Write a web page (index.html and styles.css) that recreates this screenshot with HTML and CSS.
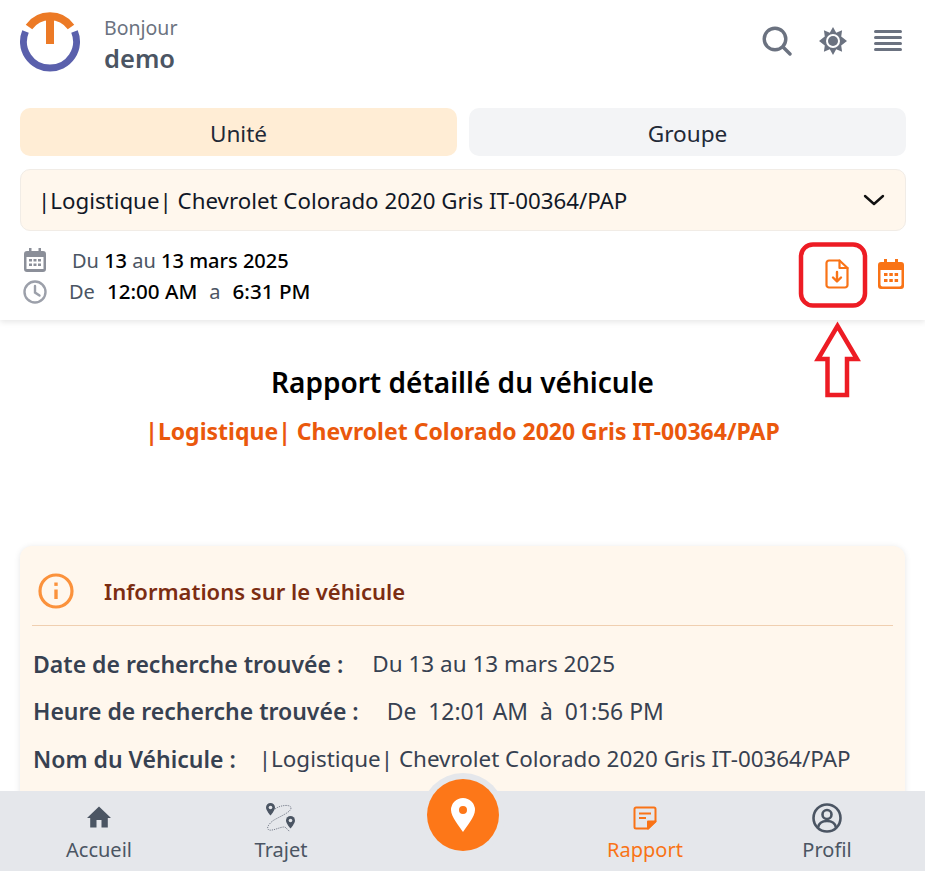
FILE: index.html
```html
<!DOCTYPE html>
<html lang="fr">
<head>
    <meta charset="UTF-8">
    <meta name="viewport" content="width=device-width, initial-scale=1.0">
    <title>Rapport détaillé du véhicule</title>
    <link rel="stylesheet" href="styles.css">
</head>
<body>
    <div class="app">
        <div class="top">
            <header class="header">
                <svg class="logo" viewBox="0 0 60 60" width="60" height="60">
                    <path d="M5.500 19.500A26.500 26.500 0 1 0 54.500 19.500" fill="none" stroke="#5a60ac" stroke-width="7"/>
                    <path d="M9 15A26 26 0 0 1 51 15" fill="none" stroke="#ec7a26" stroke-width="8"/>
                    <rect x="26" y="4" width="8" height="28" fill="#ec7a26"/>
                </svg>
                <div class="hello">
                    <div class="hello-small">Bonjour</div>
                    <div class="hello-name">demo</div>
                </div>
                <div class="header-icons">
                    <svg viewBox="0 0 30 30" width="30" height="30" fill="none" stroke="#6b7280" stroke-width="3.400">
                        <circle cx="13" cy="13" r="10.800"/>
                        <path d="M21 21l7 7" stroke-linecap="round"/>
                    </svg>
                    <svg viewBox="0 0 28 28" width="28" height="28" fill="#6b7280">
                        <path d="M14 0l3.200 5.800 5.900-2.600-.9 6.300L28 14l-5.800 4.500.9 6.300-5.900-2.600L14 28l-3.200-5.800-5.900 2.600.9-6.300L0 14l5.800-4.500-.9-6.300 5.900 2.600z"/>
                        <circle cx="14" cy="14" r="7" fill="#fff"/>
                        <circle cx="14" cy="14" r="5"/>
                    </svg>
                    <svg viewBox="0 0 28 22" width="28" height="22" fill="#6b7280">
                        <rect y="0" width="28" height="3" rx="1.500"/>
                        <rect y="6" width="28" height="3" rx="1.500"/>
                        <rect y="12" width="28" height="3" rx="1.500"/>
                        <rect y="18" width="28" height="3" rx="1.500"/>
                    </svg>
                </div>
            </header>

            <div class="tabs">
                <div class="tab tab-active">Unité</div>
                <div class="tab">Groupe</div>
            </div>

            <div class="select">
                <span>|Logistique| Chevrolet Colorado 2020 Gris IT-00364/PAP</span>
                <svg viewBox="0 0 24 24" width="24" height="24" fill="none" stroke="#111" stroke-width="2.400" stroke-linecap="round" stroke-linejoin="round">
                    <path d="M3 8l9 8 9-8"/>
                </svg>
            </div>

            <div class="period">
                <div class="period-text">
                    <div class="period-line">
                        <svg class="icon-cal" viewBox="0 0 22 24" width="22" height="24" fill="#8b8f99">
                            <path d="M5 0h2.500v3h7V0H17v3h2a3 3 0 0 1 3 3v15a3 3 0 0 1-3 3H3a3 3 0 0 1-3-3V6a3 3 0 0 1 3-3h2zM2.500 9v12h17V9z"/>
                            <path d="M5 11h3v2.500H5zM9.500 11h3v2.500h-3zM14 11h3v2.500h-3zM5 15.500h3V18H5zM9.500 15.500h3V18h-3zM14 15.500h3V18h-3z"/>
                        </svg>
                        <span class="date-label">Du <b>13</b> au <b>13 mars 2025</b></span>
                    </div>
                    <div class="period-line period-time">
                        <svg viewBox="0 0 24 24" width="24" height="24" fill="none" stroke="#9ca0aa" stroke-width="2.400" stroke-linecap="round">
                            <circle cx="12" cy="12" r="10.500"/>
                            <path d="M12 6v6.500l4.500 3"/>
                        </svg>
                        <span class="time-label"><span>De</span><b>12:00 AM</b><span>a</span><b>6:31 PM</b></span>
                    </div>
                </div>
                <div class="period-actions">
                    <svg viewBox="0 0 24 30" width="24" height="30" fill="none" stroke="#f97316" stroke-width="2.200" stroke-linejoin="round" stroke-linecap="round">
                        <path d="M4 1.500h10.500L22.500 9v17a2.500 2.500 0 0 1-2.500 2.500H4A2.500 2.500 0 0 1 1.500 26V4A2.500 2.500 0 0 1 4 1.500z"/>
                        <path d="M14.500 1.500V9h8"/>
                        <path d="M12 13v9M8 18.500l4 4 4-4" stroke-width="2.400"/>
                    </svg>
                    <svg viewBox="0 0 26 30" width="26" height="30" fill="#f97316">
                        <path d="M6 0h3v3h8V0h3v3h3a3 3 0 0 1 3 3v21a3 3 0 0 1-3 3H3a3 3 0 0 1-3-3V6a3 3 0 0 1 3-3h3zM2.500 11v14.500a2 2 0 0 0 2 2h17a2 2 0 0 0 2-2V11z"/>
                        <path d="M6 14h3.500v3H6zM11.300 14h3.500v3h-3.500zM16.600 14h3.500v3h-3.500zM6 20h3.500v3H6zM11.300 20h3.500v3h-3.500zM16.600 20h3.500v3h-3.500z"/>
                    </svg>
                </div>
            </div>
        </div>

        <main class="content">
            <h1>Rapport détaillé du véhicule</h1>
            <h2>|Logistique| Chevrolet Colorado 2020 Gris IT-00364/PAP</h2>

            <section class="card">
                <div class="card-head">
                    <svg viewBox="0 0 36 36" width="36" height="36" fill="none" stroke="#fb923c" stroke-width="3.200">
                        <circle cx="18" cy="18" r="16"/>
                        <path d="M18 16.500V26" stroke-width="3.400"/>
                        <path d="M18 9.500v3.400" stroke-width="3.400"/>
                    </svg>
                    <span>Informations sur le véhicule</span>
                </div>
                <div class="info-row"><b>Date de recherche trouvée :</b><span class="val-date">Du 13 au 13 mars 2025</span></div>
                <div class="info-row"><b>Heure de recherche trouvée :</b><span class="val-time">De&nbsp; 12:01 AM&nbsp; à&nbsp; 01:56 PM</span></div>
                <div class="info-row"><b>Nom du Véhicule :</b><span class="val-name">|Logistique| Chevrolet Colorado 2020 Gris IT-00364/PAP</span></div>
            </section>
        </main>

        <!-- annotation drawn over the screenshot -->
        <svg class="annotation" viewBox="0 0 80 160" width="80" height="160" fill="none" stroke="#ed1c24" stroke-width="4.500">
            <rect x="13" y="2.500" width="64" height="61" rx="12"/>
            <path d="M49.500 84L69 117H59V153H39.500V117H30z"/>
        </svg>

        <nav class="bottom-nav">
            <div class="nav-item nav-home">
                <svg viewBox="0 0 24 24" width="24" height="24" fill="#4b5563"><path d="M12 1.500L0 13h3.200v9.500h6.300V15h5v7.500h6.300V13H24z"/></svg>
                <span>Accueil</span>
            </div>
            <div class="nav-item">
                <svg viewBox="0 0 30 30" width="30" height="30" fill="none">
                    <path d="M9 6C14 2 25 1 25 5C25 9 15 13 8 17C2 21 0 26 3 27C7 28 14 24 18 24C21 24 21 28 24 28" stroke="#6b7280" stroke-width="0.900" stroke-dasharray="1.200 1"/>
                    <path d="M4.500 0a4.500 4.500 0 0 1 4.500 4.500c0 3-4.500 8-4.500 8S0 7.500 0 4.500A4.500 4.500 0 0 1 4.500 0z" fill="#4b5563"/>
                    <circle cx="4.500" cy="4.500" r="1.800" fill="#e5e7eb"/>
                    <path d="M24.500 13a4.500 4.500 0 0 1 4.500 4.500c0 3-4.500 8-4.500 8s-4.500-5-4.500-8a4.500 4.500 0 0 1 4.500-4.500z" fill="#4b5563"/>
                    <circle cx="24.500" cy="17.500" r="1.800" fill="#e5e7eb"/>
                </svg>
                <span>Trajet</span>
            </div>
            <div class="nav-item nav-center">
                <div class="nav-fab">
                    <svg viewBox="0 0 24 34" width="24" height="34">
                        <path fill-rule="evenodd" fill="#fff" d="M12 0a12 12 0 0 1 12 12c0 7-9 17-12 22C9 29 0 19 0 12A12 12 0 0 1 12 0zm0 8a4 4 0 1 0 0 8 4 4 0 0 0 0-8z"/>
                    </svg>
                </div>
            </div>
            <div class="nav-item nav-active">
                <svg viewBox="0 0 24 24" width="24" height="24" fill="none" stroke="#f97316" stroke-width="2" stroke-linejoin="round">
                    <path d="M3 1.500h18a1.500 1.500 0 0 1 1.500 1.500v12L15 22.500H3A1.500 1.500 0 0 1 1.500 21V3A1.500 1.500 0 0 1 3 1.500z"/>
                    <path d="M6 7.500h12M6 12h7"/>
                    <path d="M22.500 15.500H15v7z" fill="#f97316"/>
                </svg>
                <span>Rapport</span>
            </div>
            <div class="nav-item">
                <svg viewBox="0 0 30 30" width="30" height="30" fill="none" stroke="#4b5563" stroke-width="2.600">
                    <circle cx="15" cy="15" r="13.500"/>
                    <circle cx="15" cy="11.500" r="4.500"/>
                    <path d="M6 24.500c1-5 5-6.500 9-6.500s8 1.500 9 6.500"/>
                </svg>
                <span>Profil</span>
            </div>
        </nav>
    </div>
</body>
</html>
```

FILE: styles.css
```css
* { box-sizing: border-box; }
html, body {
    margin: 0;
    height: 100%;
    overflow: hidden;
}
body {
    font-family: "Noto Sans", Arial, sans-serif;
    background: white;
    color: #374151;
}
.app {
    position: relative;
    height: 871px;
    overflow: hidden;
}
.top {
    padding: 11px 19px 0 20px;
    height: 320px;
    box-shadow: 0 2px 6px rgba(0,0,0,0.1);
}
.header {
    display: flex;
    align-items: center;
    height: 62px;
}
.logo { margin-right: 24px; }
.hello { padding-top: 3px; }
.hello-small {
    font-size: 19.500px;
    line-height: 28px;
    color: #6b7280;
}
.hello-name {
    font-size: 25.500px;
    line-height: 32px;
    font-weight: 600;
    color: #4b5563;
}
.header-icons {
    margin-left: auto;
    display: flex;
    align-items: center;
    gap: 27px;
    padding-right: 4px;
    padding-bottom: 2px;
}
.tabs {
    display: flex;
    gap: 12px;
    margin-top: 35px;
}
.tab {
    flex: 1;
    height: 48px;
    border-radius: 10px;
    background: #f3f4f6;
    color: #1f2937;
    font-size: 22.600px;
    line-height: 52px;
    text-align: center;
}
.tab-active { background: #ffedd5; }
.select {
    display: flex;
    justify-content: space-between;
    align-items: center;
    height: 62px;
    margin-top: 13px;
    padding: 0 19px 0 17px;
    background: #fff7ed;
    border: 1px solid #f1ece6;
    border-radius: 10px;
    color: #111827;
    font-size: 22.300px;
}
.period {
    display: flex;
    justify-content: space-between;
    margin-top: 13px;
    padding-left: 3px;
}
.period-line {
    display: flex;
    align-items: center;
    height: 32px;
    font-size: 20px;
    color: #4b5563;
}
.period-line svg { flex-shrink: 0; }
.period-line b { font-weight: 500; color: #000; }
.period-time b { font-size: 20.600px; }
.icon-cal { margin-left: 1px; }
.date-label { margin-left: 26px; }
.time-label {
    display: flex;
    align-items: baseline;
    gap: 12px;
    margin-left: 22px;
    margin-top: -2px;
}
.period-actions {
    display: flex;
    align-items: center;
    gap: 29px;
    padding-right: 2px;
    margin-top: -2px;
    height: 64px;
}
.content { padding: 0 20px; }
h1 {
    margin: 43px 0 0;
    font-size: 28px;
    line-height: 38px;
    font-weight: 600;
    color: #000;
    text-align: center;
}
h2 {
    margin: 15px 0 0;
    font-size: 23px;
    line-height: 30px;
    font-weight: 700;
    color: #ea580c;
    text-align: center;
}
.card {
    margin-top: 100px;
    padding: 12px 12px 40px;
    background: #fff7ed;
    border-radius: 12px;
    box-shadow: 0 1px 6px rgba(0,0,0,0.1);
}
.card-head {
    display: flex;
    align-items: center;
    height: 68px;
    padding-left: 6px;
    padding-bottom: 2px;
    border-bottom: 1px solid #f0cfb0;
    color: #7c2d12;
    font-size: 22px;
    font-weight: 600;
}
.card-head svg { margin-right: 30px; }
.info-row {
    display: flex;
    height: 47.500px;
    align-items: center;
    font-size: 22.500px;
    color: #374151;
}
.info-row:nth-of-type(2) { margin-top: 14px; }
.info-row b { font-size: 23px; font-weight: 600; padding-left: 1px; }
.val-date { margin-left: 29px; }
.val-time { margin-left: 28px; font-size: 22.900px; }
.val-name { margin-left: 23px; font-size: 22.400px; }
.annotation {
    position: absolute;
    left: 788px;
    top: 242px;
}
.bottom-nav {
    position: absolute;
    left: 0;
    right: 0;
    bottom: 0;
    height: 80px;
    display: grid;
    grid-template-columns: 198px 166px 197px 168px 196px;
    background: #e5e7eb;
}
.nav-item {
    display: flex;
    flex-direction: column;
    align-items: center;
    justify-content: flex-end;
    padding-bottom: 6px;
    color: #4b5563;
    font-size: 20px;
    line-height: 30px;
}
.nav-item svg { margin-bottom: 2px; }
.nav-home svg { margin-bottom: 6px; }
.nav-active svg { margin-bottom: 5px; }
.nav-active { color: #f97316; }
.nav-center { position: relative; }
.nav-fab {
    position: absolute;
    top: -12px;
    left: 50%;
    transform: translateX(-50%);
    width: 72px;
    height: 72px;
    border-radius: 50%;
    background: #fd7718;
    box-shadow: 0 0 0 6px #e5e7eb;
    display: flex;
    align-items: center;
    justify-content: center;
}
.nav-fab svg { margin-bottom: 0; }
```
